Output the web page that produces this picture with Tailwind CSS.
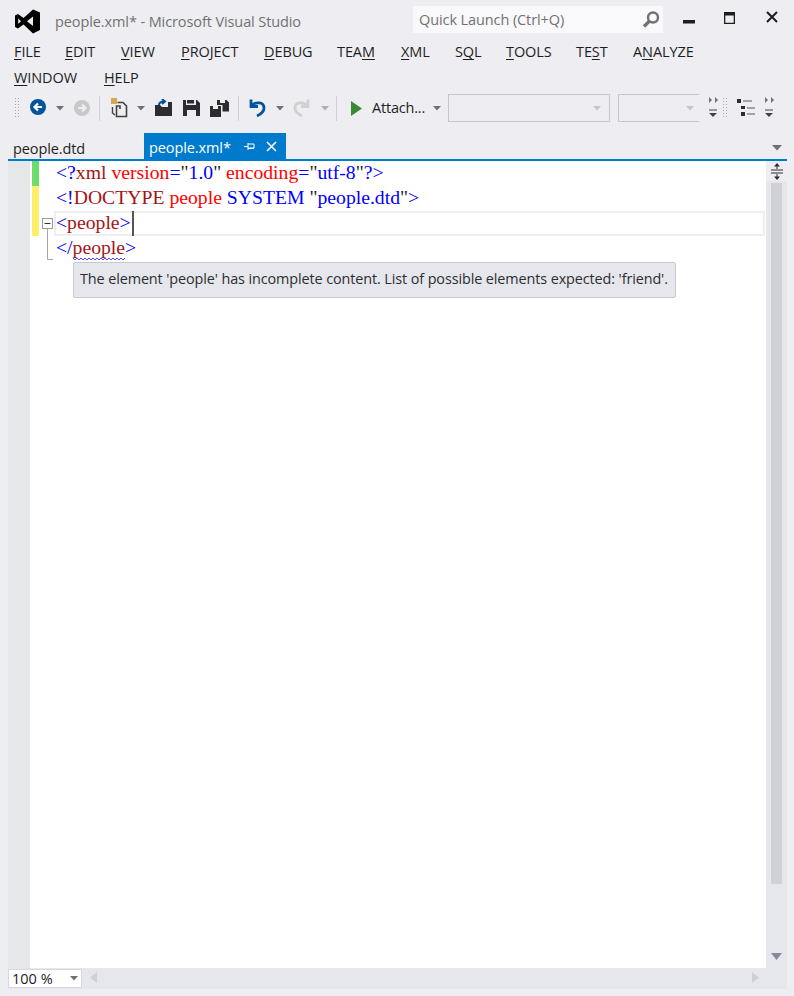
<!DOCTYPE html>
<html>
<head>
<meta charset="utf-8">
<script src="https://cdn.jsdelivr.net/npm/@tailwindcss/browser@4"></script>
</head>
<body class="m-0">
<div class="relative flex h-[996px] w-[794px] flex-col overflow-hidden bg-[#eeeef2] font-['Open_Sans',sans-serif] text-[14.5px] text-[#1e1e1e]">

  <!-- Title bar -->
  <header class="flex h-[39px] items-start">
    <svg class="ml-[15px] mt-[9px] shrink-0" width="25" height="25" viewBox="0 0 25 25"><path fill="#000" d="M18 0.5 L25 3.5 V21 L18 24.5 L8.5 15.5 L3 19.5 L0 18 V6.5 L3 5 L8.5 9 Z M3.2 9.5 V14.8 L6 12.2 Z M18 7.5 L12 12.2 L18 17 Z"/></svg>
    <div class="ml-[15px] mt-[11px] w-[250px] whitespace-nowrap text-[14.5px] leading-[22px] tracking-[-0.1px] text-[#717171]">people.xml* - Microsoft Visual Studio</div>
    <div class="ml-[108px] mt-[6px] flex h-[27px] w-[250px] items-center justify-between bg-[#f9f9fb] pl-[6px] pr-[2px] text-[14.5px] tracking-[-0.1px] text-[#717171]">
      <span>Quick Launch (Ctrl+Q)</span>
      <svg width="20" height="20" viewBox="0 0 20 20"><circle cx="12" cy="7.5" r="5" fill="none" stroke="#717171" stroke-width="2.4"/><path d="M8.5 11 L3 16.5" stroke="#717171" stroke-width="3.2"/></svg>
    </div>
    <svg class="ml-[20px] mt-[20px]" width="12" height="4" viewBox="0 0 12 4"><rect width="12" height="3.5" fill="#1e1e1e"/></svg>
    <svg class="ml-[29px] mt-[12px]" width="11" height="12" viewBox="0 0 11 12"><path d="M0 0 H11 V12 H0 Z M1.3 3.5 V10.7 H9.7 V3.5 Z" fill="#1e1e1e" fill-rule="evenodd"/></svg>
    <svg class="ml-[31px] mt-[11px]" width="12" height="12" viewBox="0 0 12 12"><path d="M1 1 L11 11 M11 1 L1 11" stroke="#1e1e1e" stroke-width="2"/></svg>
  </header>

  <!-- Menu -->
  <nav class="flex h-[55px] flex-wrap content-start pl-[14px] pr-[20px] text-[14.5px] leading-[26px] tracking-[-0.1px] text-[#1e1e1e] [&_u]:underline-offset-2">
    <span class="w-[51px]"><u>F</u>ILE</span>
    <span class="w-[56px]"><u>E</u>DIT</span>
    <span class="w-[60px]"><u>V</u>IEW</span>
    <span class="w-[83px]"><u>P</u>ROJECT</span>
    <span class="w-[73px]"><u>D</u>EBUG</span>
    <span class="w-[64px]">TEA<u>M</u></span>
    <span class="w-[54px]"><u>X</u>ML</span>
    <span class="w-[51px]">S<u>Q</u>L</span>
    <span class="w-[70px]"><u>T</u>OOLS</span>
    <span class="w-[57px]">TE<u>S</u>T</span>
    <span class="w-[71px]">A<u>N</u>ALYZE</span>
    <span class="w-[90px]"><u>W</u>INDOW</span>
    <span class="w-[60px]"><u>H</u>ELP</span>
  </nav>

  <!-- Toolbar -->
  <div class="flex h-[28px] items-center">
    <div class="ml-[14px] h-[22px] w-[6px] bg-[radial-gradient(#a8a8a8_1px,transparent_1px)] bg-[length:3px_3px]"></div>
    <svg class="ml-[9px]" width="18" height="18" viewBox="0 0 18 18"><circle cx="9" cy="8" r="8" fill="#00539c"/><path d="M13 8 H6 M9 4.5 L5.5 8 L9 11.5" fill="none" stroke="#fff" stroke-width="2.2"/></svg>
    <svg class="ml-[9px]" width="8" height="5" viewBox="0 0 8 5"><path d="M0 0 H8 L4 4.5 Z" fill="#717171"/></svg>
    <svg class="ml-[9px]" width="18" height="18" viewBox="0 0 18 18"><circle cx="9" cy="9" r="8" fill="#c8c8c8"/><path d="M5 9 H12 M9 5.5 L12.5 9 L9 12.5" fill="none" stroke="#eeeef2" stroke-width="2.2"/></svg>
    <div class="ml-[8px] h-[25px] w-px bg-[#cfd0dc]"></div>
    <svg class="ml-[10px]" width="18" height="20" viewBox="0 0 18 20"><rect x="1" y="0" width="6" height="6" fill="#d8a850"/><path d="M7.5 4.5 H13 L16.5 8 V18.5 H6.5 V8 H10 V11" fill="none" stroke="#424242" stroke-width="1.6"/><path d="M2.5 9 V15 L5 17" fill="none" stroke="#424242" stroke-width="1.4"/></svg>
    <svg class="ml-[9px]" width="8" height="5" viewBox="0 0 8 5"><path d="M0 0 H8 L4 4.5 Z" fill="#717171"/></svg>
    <svg class="ml-[9px]" width="19" height="18" viewBox="0 0 19 18"><path d="M1 6 H6 L8 8 H14 V3 H18 V17 H1 Z" fill="#2d2d30"/><path d="M5 6 C5 3 7 2.5 10 2.5 M8 0 L11 2.5 L8 5" fill="none" stroke="#00539c" stroke-width="2"/></svg>
    <svg class="ml-[10px]" width="17" height="16" viewBox="0 0 17 16"><path d="M0 0 H3 V5 H13 V0 H14 L17 3 V16 H0 Z M4 0 H11 V3.5 H4 Z M4 10 V16 H13 V10 Z" fill="#2d2d30" fill-rule="evenodd"/></svg>
    <svg class="ml-[10px]" width="19" height="17" viewBox="0 0 19 17"><path d="M0 6 H3 V9 H8 V6 H11 V17 H0 Z M7 0 H10 V3 H15 V0 H16.5 L19 2.5 V11.5 H12.5 V5 H7 Z" fill="#2d2d30"/></svg>
    <div class="ml-[9px] h-[25px] w-px bg-[#cfd0dc]"></div>
    <svg class="ml-[10px]" width="17" height="20" viewBox="0 0 17 20"><path d="M2 1.5 V8.5 H9 M2.5 8 C6 3.5 15 3.5 15 10 C15 13.5 12 16 8 18" fill="none" stroke="#00539c" stroke-width="2.8"/></svg>
    <svg class="ml-[10px]" width="8" height="5" viewBox="0 0 8 5"><path d="M0 0 H8 L4 4.5 Z" fill="#717171"/></svg>
    <svg class="ml-[9px]" width="17" height="20" viewBox="0 0 17 20"><path d="M15 1.5 V8.5 H8 M14.5 8 C11 3.5 2 3.5 2 10 C2 13.5 5 16 9 18" fill="none" stroke="#d0d0d0" stroke-width="2.8"/></svg>
    <svg class="ml-[11px]" width="8" height="5" viewBox="0 0 8 5"><path d="M0 0 H8 L4 4.5 Z" fill="#b0b0b0"/></svg>
    <div class="ml-[7px] h-[25px] w-px bg-[#cfd0dc]"></div>
    <svg class="ml-[14px]" width="11" height="15" viewBox="0 0 11 15"><path d="M0 0 L11 7.5 L0 15 Z" fill="#388a34"/></svg>
    <span class="ml-[10px] w-[60px] whitespace-nowrap tracking-[-0.2px]">Attach...</span>
    <svg class="ml-[1px]" width="8" height="5" viewBox="0 0 8 5"><path d="M0 0 H8 L4 4.5 Z" fill="#717171"/></svg>
    <div class="ml-[7px] flex h-[28px] w-[162px] items-center justify-end border border-[#c6c6c6] pr-[2px]">
      <svg class="mr-[6px]" width="8" height="5" viewBox="0 0 8 5"><path d="M0 0 H8 L4 4.5 Z" fill="#c6c6c6"/></svg>
    </div>
    <div class="ml-[8px] flex h-[28px] w-[81px] items-center justify-end border-y border-l border-[#c6c6c6]">
      <svg class="mr-[5px]" width="8" height="5" viewBox="0 0 8 5"><path d="M0 0 H8 L4 4.5 Z" fill="#c6c6c6"/></svg>
    </div>
    <svg class="ml-[9px]" width="10" height="22" viewBox="0 0 10 22"><path d="M1 0 L4 3 L1 6 Z M7 0 L10 3 L7 6 Z" fill="#717171"/><path d="M1 13 H9" stroke="#424242" stroke-width="1"/><path d="M1 16 H9 L5 20 Z" fill="#424242"/></svg>
    <div class="ml-[4px] h-[22px] w-[6px] bg-[radial-gradient(#a8a8a8_1px,transparent_1px)] bg-[length:3px_3px]"></div>
    <svg class="ml-[9px]" width="18" height="22" viewBox="0 0 18 22"><rect x="0" y="2" width="4" height="4" fill="#2d2d30"/><path d="M6 4 H15" stroke="#717171" stroke-width="1.2"/><rect x="4" y="9" width="4" height="3" fill="#2d2d30"/><path d="M10 11 H18" stroke="#717171" stroke-width="1.2"/><rect x="4" y="15" width="4" height="4" fill="#2d2d30"/><path d="M10 17 H18" stroke="#717171" stroke-width="1.2"/></svg>
    <svg class="ml-[9px]" width="10" height="22" viewBox="0 0 10 22"><path d="M1 0 L4 3 L1 6 Z M7 0 L10 3 L7 6 Z" fill="#717171"/><path d="M1 13 H9" stroke="#424242" stroke-width="1"/><path d="M1 16 H9 L5 20 Z" fill="#424242"/></svg>
  </div>

  <!-- Tabs -->
  <div class="mt-[11px] flex h-[26px] items-stretch">
    <div class="ml-[13px] w-[131px] pt-[5px] leading-[22px] tracking-[-0.1px]">people.dtd</div>
    <div class="flex w-[142px] items-center bg-[#007acc] pl-[5px] text-white">
      <span class="w-[95px] pt-[3px] tracking-[-0.1px]">people.xml*</span>
      <svg width="11" height="9" viewBox="0 0 11 9"><path d="M0 4.5 H4 M4 1 V8 M4 2 H10 V6 H4 M4 6.5 H10" fill="none" stroke="#fff" stroke-width="1"/></svg>
      <svg class="ml-[11px]" width="11" height="11" viewBox="0 0 11 11"><path d="M1 1 L10 10 M10 1 L1 10" stroke="#fff" stroke-width="1.6"/></svg>
    </div>
    <svg class="ml-[486px] mt-[12px]" width="10" height="6" viewBox="0 0 10 6"><path d="M0 0 H10 L5 5.5 Z" fill="#717171"/></svg>
  </div>

  <!-- Editor -->
  <main class="ml-[8px] flex h-[809px] w-[779px] border-t-2 border-[#007acc]">
    <div class="w-[22px] shrink-0 bg-[#e6e7e8]"></div>
    <div class="flex w-[9px] shrink-0 flex-col bg-white pl-[2px]">
      <div class="h-[25px] w-[7px] bg-[#6cdc6c]"></div>
      <div class="h-[50px] w-[7px] bg-[#fdee6c]"></div>
    </div>
    <div class="w-[15px] shrink-0 bg-white"></div>
    <div class="relative flex-1 bg-white font-['Liberation_Serif',serif] text-[19.7px] leading-[23px]">
      <div class="h-[25px] whitespace-nowrap pl-[2px]"><span class="text-[#0000ff]">&lt;?</span><span class="text-[#a31515]">xml</span> <span class="text-[#ff0000]">version</span><span class="text-[#0000ff]">=</span>"<span class="text-[#0000ff]">1.0</span>" <span class="text-[#ff0000]">encoding</span><span class="text-[#0000ff]">=</span>"<span class="text-[#0000ff]">utf-8</span>"<span class="text-[#0000ff]">?&gt;</span></div>
      <div class="h-[25px] whitespace-nowrap pl-[2px]"><span class="text-[#0000ff]">&lt;!</span><span class="text-[#a31515]">DOCTYPE</span> <span class="text-[#ff0000]">people</span> <span class="text-[#0000ff]">SYSTEM</span> "<span class="text-[#0000ff]">people.dtd</span>"<span class="text-[#0000ff]">&gt;</span></div>
      <div class="mr-px h-[25px] whitespace-nowrap border-2 border-[#eeeef2] leading-[19px]"><span class="text-[#0000ff]">&lt;</span><span class="text-[#a31515]">people</span><span class="text-[#0000ff]">&gt;</span></div>
      <div class="h-[25px] whitespace-nowrap pl-[2px]"><span class="text-[#0000ff]">&lt;/</span><span class="text-[#a31515]">people</span><span class="text-[#0000ff]">&gt;</span></div>

      <div class="absolute left-[78px] top-[50px] h-[25px] w-[2px] bg-[#555]"></div>
      <svg class="absolute left-[-12px] top-[57px]" width="11" height="42" viewBox="0 0 11 42"><rect x="0.5" y="0.5" width="10" height="10" fill="#fff" stroke="#9a9a9a"/><path d="M2.5 5.5 H8.5" stroke="#333"/><path d="M5.5 11 V42 H11" fill="none" stroke="#a5a5a5" transform="translate(0 -0.5)"/></svg>
      <svg class="absolute left-[19px] top-[96px]" width="53" height="4" viewBox="0 0 53 4"><path d="M0 1 L2 3 L4 1 L6 3 L8 1 L10 3 L12 1 L14 3 L16 1 L18 3 L20 1 L22 3 L24 1 L26 3 L28 1 L30 3 L32 1 L34 3 L36 1 L38 3 L40 1 L42 3 L44 1 L46 3 L48 1 L50 3 L52 1" fill="none" stroke="#4a4aff" stroke-width="1"/></svg>
      <div class="absolute left-[19px] top-[101px] flex h-[36px] w-[603px] items-center rounded-[2px] border border-[#c9cad6] bg-[#e6e7ec] pb-[2px] pl-[6px] font-['Open_Sans',sans-serif] text-[14.4px] leading-[20px] tracking-[-0.1px] whitespace-nowrap text-[#2d2d30]">The element 'people' has incomplete content. List of possible elements expected: 'friend'.</div>
    </div>
    <aside class="flex w-[21px] shrink-0 flex-col items-center bg-[#e6e7ec]">
      <div class="flex h-[20px] w-full items-center justify-center bg-[#eeeef2]">
        <svg width="14" height="17" viewBox="0 0 14 17"><path d="M1 7 H13 M1 10 H13" stroke="#2d2d30" stroke-width="1.2"/><path d="M7 0 L10 3.5 H4 Z M7 17 L10 13.5 H4 Z" fill="#2d2d30"/><path d="M7 3 V6 M7 11 V14" stroke="#2d2d30"/></svg>
      </div>
      <div class="mt-[2px] h-[701px] w-[11px] bg-[#d0d1d7]"></div>
      <svg class="mt-[69px]" width="11" height="7" viewBox="0 0 11 7"><path d="M0 0 H11 L5.5 7 Z" fill="#868999"/></svg>
    </aside>
  </main>

  <!-- Bottom bar -->
  <footer class="ml-[8px] flex h-[21px] w-[779px] bg-[#e6e7ec]">
    <div class="mt-px flex h-[19px] w-[74px] shrink-0 items-center justify-between border border-[#d6d7e0] bg-white pl-[3px] pr-[3px] text-[14.5px]">
      <span>100 %</span>
      <svg width="8" height="5" viewBox="0 0 8 5"><path d="M0 0 H8 L4 4.5 Z" fill="#717171"/></svg>
    </div>
    <svg class="ml-[8px] mt-[4px]" width="7" height="11" viewBox="0 0 7 11"><path d="M7 0 V11 L0 5.5 Z" fill="#cfd0d7"/></svg>
    <svg class="ml-[655px] mt-[4px]" width="7" height="11" viewBox="0 0 7 11"><path d="M0 0 V11 L7 5.5 Z" fill="#cfd0d7"/></svg>
  </footer>
</div>
</body>
</html>
